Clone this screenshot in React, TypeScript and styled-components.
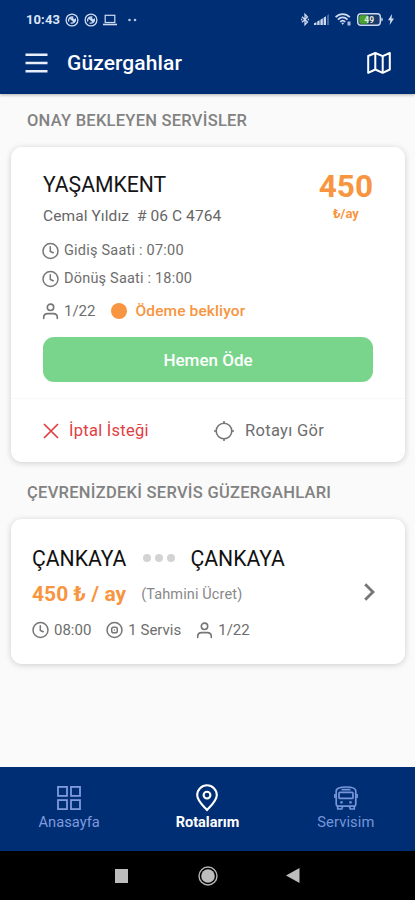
import React from "react";
import styled, { createGlobalStyle } from "styled-components";

const GlobalStyle = createGlobalStyle`
  * { box-sizing: border-box; }
  html, body { margin: 0; padding: 0; }
  body { font-family: Roboto, "Noto Sans", sans-serif; background: #fafafa; }
  svg { display: block; flex: none; overflow: visible; }
`;

const Screen = styled.div`
  width: 415px;
  height: 900px;
  display: flex;
  flex-direction: column;
  background: #fafafa;
  overflow: hidden;
`;

const Header = styled.header`
  height: 94px;
  flex: none;
  background: #002e74;
  color: #fff;
  box-shadow: 0 1px 3px rgba(0, 0, 0, 0.3);
`;

const StatusBar = styled.div`
  height: 39px;
  padding: 0 21px 0 26px;
  display: flex;
  align-items: center;
  color: #cfdaf0;
`;

const StatusGroup = styled.div<{ $gap: number }>`
  display: flex;
  align-items: center;
  gap: ${(p) => p.$gap}px;
`;

const Spacer = styled.div`
  flex: 1;
`;

const AppBar = styled.div`
  height: 50px;
  padding: 0 24px 2px 25px;
  display: flex;
  align-items: center;
`;

const Text = styled.span<{ $size: number; $weight?: number; $color?: string; $spacing?: number }>`
  font-size: ${(p) => p.$size}px;
  font-weight: ${(p) => p.$weight ?? 400};
  color: ${(p) => p.$color ?? "#6d6d6d"};
  letter-spacing: ${(p) => p.$spacing ?? 0}px;
  line-height: 1.2;
  white-space: nowrap;
`;

const BarTitle = styled.h1`
  margin: 0 auto 0 19px;
  font-size: 21px;
  font-weight: 500;
  letter-spacing: 0.1px;
  line-height: 26px;
`;

const Content = styled.main`
  flex: 1;
  padding: 0 10px 0 11px;
`;

const SectionTitle = styled.h2<{ $height: number; $spacing: number }>`
  margin: 0;
  padding: ${(p) => p.$height - 53}px 16px 0;
  height: ${(p) => p.$height}px;
  display: flex;
  align-items: center;
  font-size: 16.5px;
  font-weight: 500;
  letter-spacing: ${(p) => p.$spacing}px;
  color: #828282;
  white-space: nowrap;
`;

const Card = styled.section`
  background: #fff;
  border-radius: 11px;
  box-shadow: 0 1px 6px rgba(0, 0, 0, 0.18);
`;

const PendingCard = styled(Card)`
  height: 315px;
  display: flex;
  flex-direction: column;
`;

const PendingBody = styled.div`
  height: 252px;
  padding: 24px 32px 0 32px;
  border-bottom: 1px solid #f8f8f8;
`;

const PendingTop = styled.div`
  height: 66px;
  display: flex;
  justify-content: space-between;
`;

const Names = styled.div`
  display: flex;
  flex-direction: column;
  gap: 10px;
  padding-top: 1px;
`;

const Price = styled.div`
  display: flex;
  flex-direction: column;
  align-items: center;
  margin: -3px 0 0;
`;

const Line = styled.div<{ $height: number; $gap?: number }>`
  height: ${(p) => p.$height}px;
  display: flex;
  align-items: center;
  gap: ${(p) => p.$gap ?? 5}px;
`;

const TimeLine = styled(Line)`
  margin-left: -1px;
`;

const StatusDot = styled.i`
  width: 16px;
  height: 16px;
  margin: 0 3px 0 11px;
  border-radius: 50%;
  background: #f79540;
`;

const PayButton = styled.button`
  width: 100%;
  height: 45px;
  margin-top: 8px;
  border: 0;
  border-radius: 11px;
  background: #78d58b;
  color: #fff;
  font: 500 17px Roboto, sans-serif;
`;

const Actions = styled.div`
  flex: 1;
  padding: 0 32px;
  display: grid;
  grid-template-columns: 171px 1fr;
`;

const Action = styled.div<{ $gap: number }>`
  display: flex;
  align-items: center;
  gap: ${(p) => p.$gap}px;
`;

const RouteCard = styled(Card)`
  height: 145px;
  padding: 24px 30px 0 21px;
  display: flex;
  justify-content: space-between;
`;

const RouteInfo = styled.div`
  display: flex;
  flex-direction: column;
`;

const Chevron = styled.div`
  height: 98px;
  display: flex;
  align-items: center;
`;

const Dots = styled.div`
  display: flex;
  gap: 4px;
  margin: 0 15px 2px 17px;
`;

const Dot = styled.i`
  width: 8px;
  height: 8px;
  border-radius: 50%;
  background: #d3d3d3;
`;

const Meta = styled.div<{ $gap: number }>`
  display: flex;
  align-items: center;
  gap: ${(p) => p.$gap}px;
  margin-right: 15px;
`;

const TabBar = styled.nav`
  height: 84px;
  flex: none;
  padding-top: 16px;
  display: grid;
  grid-template-columns: repeat(3, 1fr);
  background: #002e74;
`;

const Tab = styled.div`
  display: flex;
  flex-direction: column;
  align-items: center;
  gap: 2px;
`;

const SystemBar = styled.footer`
  height: 49px;
  flex: none;
  padding: 0 115px 0 114px;
  display: flex;
  align-items: center;
  justify-content: space-between;
  background: #000;
`;

const Clock = () => (
  <svg width="17" height="17" viewBox="0 0 17 17" fill="none" stroke="#767676" strokeWidth="1.5" strokeLinecap="round">
    <circle cx="8.5" cy="8" r="7.5" />
    <path d="M8.3 3.7v4.7l3 1.4" />
  </svg>
);

const Person = () => (
  <svg width="17" height="17" viewBox="0 0 17 17" fill="none" stroke="#767676" strokeWidth="1.6" strokeLinecap="round">
    <circle cx="8.5" cy="4.3" r="3.2" />
    <path d="M1.7 15.4v-1.1c0-2.4 1.7-3.7 4-3.7h5.6c2.3 0 4 1.3 4 3.7v1.1" />
  </svg>
);

const Service = () => (
  <svg width="17" height="17" viewBox="0 0 17 17" fill="none" stroke="#767676" strokeWidth="1.5">
    <circle cx="8.5" cy="8" r="7.5" />
    <rect x="5.7" y="5.2" width="5.6" height="5.6" rx="1.8" />
    <circle cx="8.5" cy="8" r=".7" fill="#767676" stroke="none" />
  </svg>
);

const SyncBadge = () => (
  <svg width="14" height="14" viewBox="0 0 14 14" fill="none" stroke="#cfdaf0">
    <circle cx="7" cy="7" r="5.9" strokeWidth="1.3" />
    <path d="M3.7 8.5c-.8-3 2-5.3 4.7-4.4M10.3 5.500c.8 3-2 5.300-4.700 4.400M4.300 4.500l5.500 5M6.600 4.700l3.200 3" strokeWidth="1.4" />
  </svg>
);

const Laptop = () => (
  <svg width="14" height="12" viewBox="0 0 14 12" fill="none" stroke="#cfdaf0" strokeWidth="1.2">
    <rect x="2.2" y="1.3" width="9.6" height="7.2" />
    <path d="M0 10.5h14" strokeWidth="1.6" />
  </svg>
);

const Bluetooth = () => (
  <svg width="8" height="13" viewBox="0 0 8 13" fill="none" stroke="#cfdaf0" strokeWidth="1.3">
    <path d="M1 3.7l5.5 5.3L4 11.7V1.3L6.5 4 1 9.3" />
    <path d="M0 6.5h1.2M6.8 6.5H8" />
  </svg>
);

const Signal = () => (
  <svg width="16" height="11" viewBox="0 0 16 11" fill="#cfdaf0">
    <path d="M0 11V9.3l2.4-1V11zM3.200 11V7.500l2.400-1.300V11zM6.400 11V5.700l2.400-1.500V11zM9.600 11V3.700L12 2.200V11z" />
    <path d="M13 11V1.500L15 0v11z" opacity=".35" />
  </svg>
);

const Wifi = () => (
  <svg width="17" height="13" viewBox="0 0 17 13" fill="none" stroke="#cfdaf0" strokeWidth="1.8">
    <path d="M.6 4.200c4-4.100 10.200-4.100 14.200 0M2.900 6.600c2.900-2.900 6.700-2.900 9.600 0M5.200 8.900c1.700-1.700 3.300-1.700 5 0" />
    <path d="M6.200 9.700L7.700 12l1.500-2.300z" fill="#cfdaf0" stroke="none" />
    <rect x="12.5" y="8.5" width="3" height="4" fill="#a9bbdc" stroke="none" />
  </svg>
);

const Battery = () => (
  <svg width="26" height="13" viewBox="0 0 26 13">
    <rect x=".7" y=".7" width="22.6" height="11.6" rx="3" fill="#193a6c" stroke="#cfdaf0" strokeWidth="1.4" />
    <rect x="2.3" y="2.3" width="9.2" height="8.4" rx="1.5" fill="#4ba529" />
    <path d="M24.3 4.500c2 .5 2 3.500 0 4z" fill="#cfdaf0" />
    <text x="12.2" y="9.7" textAnchor="middle" fontFamily="Roboto" fontWeight="700" fontSize="8.5" fill="#e3eddf">49</text>
  </svg>
);

const Bolt = () => (
  <svg width="6" height="11" viewBox="0 0 6 11" fill="#cfdaf0">
    <path d="M4 0L0 6.300h2.300L1.600 11 6 4.500H3.600z" />
  </svg>
);

const MapIcon = () => (
  <svg width="24" height="22" viewBox="0 0 24 22" fill="none" stroke="#fff" strokeWidth="2" strokeLinejoin="round">
    <path d="M1.200 4L8.300 1l7.400 3.200L22.800 1v16.500l-7.100 3.300-7.400-3.300-7.100 3.300z" />
    <path d="M8.300 1v16.500M15.700 4.200v16.600" />
  </svg>
);

const GridIcon = () => (
  <svg width="24" height="24" viewBox="0 0 24 24" fill="none" stroke="#7f9bdd" strokeWidth="1.8">
    <rect x="1" y=".9" width="9" height="9" />
    <rect x="14" y=".9" width="9" height="9" />
    <rect x="1" y="14.1" width="9" height="9" />
    <rect x="14" y="14.1" width="9" height="9" />
  </svg>
);

const PinIcon = () => (
  <svg width="22" height="27" viewBox="0 0 22 27" fill="none" stroke="#fff" strokeWidth="2.1">
    <path d="M11 26C7 21.700 1.200 17 1.200 11.100a9.800 9.800 0 0 1 19.600 0C20.800 17 15 21.700 11 26z" />
    <circle cx="11" cy="11.1" r="3.4" />
  </svg>
);

const BusIcon = () => (
  <svg width="24" height="24" viewBox="0 0 24 24" fill="none" stroke="#7796d8" strokeWidth="1.7" strokeLinejoin="round">
    <path d="M2.200 5C2.200 2.200 6 1 12 1s9.800 1.200 9.800 4v12.500c0 1.800-.6 2.700-1.700 2.700H3.900c-1.100 0-1.700-.9-1.700-2.700z" />
    <path d="M7.500 3.700h9M.9 8v4M23.100 8v4M3.700 20.300v2.700h4l1-2.700M15.300 20.300l1 2.700h4v-2.700" />
    <rect x="5" y="6.4" width="14" height="6" rx="1" />
    <path d="M6.300 16.400h2.400M15.300 16.400h2.400" strokeWidth="2.4" />
  </svg>
);

export default function App() {
  return (
    <>
      <GlobalStyle />
      <Screen>
        <Header>
          <StatusBar>
            <StatusGroup $gap={5}>
              <Text $size={13} $weight={700} $color="#dce5f5" $spacing={0.1}>10:43</Text>
              <SyncBadge />
              <SyncBadge />
              <Laptop />
              <svg width="18" height="4" viewBox="0 0 18 4" fill="#b5c4e1">
                <circle cx="7.5" cy="2" r="1.3" />
                <circle cx="13" cy="2" r="1.3" />
              </svg>
            </StatusGroup>
            <Spacer />
            <StatusGroup $gap={5}>
              <Bluetooth />
              <Signal />
              <Wifi />
              <Battery />
              <Bolt />
            </StatusGroup>
          </StatusBar>
          <AppBar>
            <svg width="23" height="20" viewBox="0 0 23 20" stroke="#e8eefb" strokeWidth="2.4">
              <path d="M.5 1.800h22M.5 10h22M.5 18.200h22" />
            </svg>
            <BarTitle>Güzergahlar</BarTitle>
            <MapIcon />
          </AppBar>
        </Header>

        <Content>
          <SectionTitle $height={53} $spacing={0.25}>ONAY BEKLEYEN SERVİSLER</SectionTitle>
          <PendingCard>
            <PendingBody>
              <PendingTop>
                <Names>
                  <Text $size={21.2} $color="#151515">YAŞAMKENT</Text>
                  <Text $size={15.5} $color="#666" $spacing={0.08}>Cemal Yıldız&nbsp; # 06 C 4764</Text>
                </Names>
                <Price>
                  <Text $size={31.5} $weight={700} $color="#f79540">450</Text>
                  <Text $size={13} $weight={700} $color="#f79540">₺/ay</Text>
                </Price>
              </PendingTop>
              <TimeLine $height={28}>
                <Clock />
                <Text $size={14.5} $spacing={0.22}>Gidiş Saati : 07:00</Text>
              </TimeLine>
              <TimeLine $height={28}>
                <Clock />
                <Text $size={14.5} $spacing={0.2}>Dönüş Saati : 18:00</Text>
              </TimeLine>
              <TimeLine $height={36}>
                <Person />
                <Text $size={15}>1/22</Text>
                <StatusDot />
                <Text $size={15.5} $weight={500} $color="#f79540" $spacing={0.12}>Ödeme bekliyor</Text>
              </TimeLine>
              <PayButton>Hemen Öde</PayButton>
            </PendingBody>
            <Actions>
              <Action $gap={10}>
                <svg width="16" height="16" viewBox="0 0 16 16" stroke="#e23e42" strokeWidth="1.7">
                  <path d="M1 1l14 14M15 1L1 15" />
                </svg>
                <Text $size={16.5} $color="#e23e42" $spacing={0.25}>İptal İsteği</Text>
              </Action>
              <Action $gap={11}>
                <svg width="20" height="20" viewBox="0 0 20 20" fill="none" stroke="#767676" strokeWidth="1.6">
                  <circle cx="10" cy="10" r="7.8" />
                  <path d="M10 0v3M10 17v3M0 10h3M17 10h3" />
                </svg>
                <Text $size={16.5} $spacing={0.3}>Rotayı Gör</Text>
              </Action>
            </Actions>
          </PendingCard>

          <SectionTitle $height={57} $spacing={0.27}>ÇEVRENİZDEKİ SERVİS GÜZERGAHLARI</SectionTitle>
          <RouteCard>
            <RouteInfo>
              <Line $height={32} $gap={0}>
                <Text $size={21.2} $color="#111">ÇANKAYA</Text>
                <Dots><Dot /><Dot /><Dot /></Dots>
                <Text $size={21.2} $color="#111">ÇANKAYA</Text>
              </Line>
              <Line $height={39} $gap={15}>
                <Text $size={21} $weight={700} $color="#f79540" $spacing={0.05}>450 ₺ / ay</Text>
                <Text $size={14.5} $color="#888" $spacing={0.12}>(Tahmini Ücret)</Text>
              </Line>
              <Line $height={32} $gap={0}>
                <Meta $gap={5}><Clock /><Text $size={15}>08:00</Text></Meta>
                <Meta $gap={5}><Service /><Text $size={15}>1 Servis</Text></Meta>
                <Meta $gap={5}><Person /><Text $size={15}>1/22</Text></Meta>
              </Line>
            </RouteInfo>
            <Chevron>
              <svg width="11" height="18" viewBox="0 0 11 18" fill="none" stroke="#767676" strokeWidth="2.8">
                <path d="M1.200 1.200L9 9l-7.800 7.800" />
              </svg>
            </Chevron>
          </RouteCard>
        </Content>

        <TabBar>
          <Tab>
            <Line $height={29}><GridIcon /></Line>
            <Text $size={14.7} $color="#7f9bdd">Anasayfa</Text>
          </Tab>
          <Tab>
            <Line $height={29}><PinIcon /></Line>
            <Text $size={14.5} $weight={700} $color="#fff">Rotalarım</Text>
          </Tab>
          <Tab>
            <Line $height={29}><BusIcon /></Line>
            <Text $size={14.7} $color="#7796d8" $spacing={0.1}>Servisim</Text>
          </Tab>
        </TabBar>

        <SystemBar>
          <svg width="15" height="14" viewBox="0 0 15 14"><path d="M1 0h13v14H1z" fill="#bdbdbd" /></svg>
          <svg width="20" height="20" viewBox="0 0 20 20">
            <circle cx="10" cy="10" r="9" fill="none" stroke="#b5b5b5" strokeWidth="1.4" />
            <circle cx="10" cy="10" r="6.8" fill="#bdbdbd" />
          </svg>
          <svg width="14" height="15" viewBox="0 0 14 15"><path d="M0 7.500L13.500 0v15z" fill="#bdbdbd" /></svg>
        </SystemBar>
      </Screen>
    </>
  );
}
